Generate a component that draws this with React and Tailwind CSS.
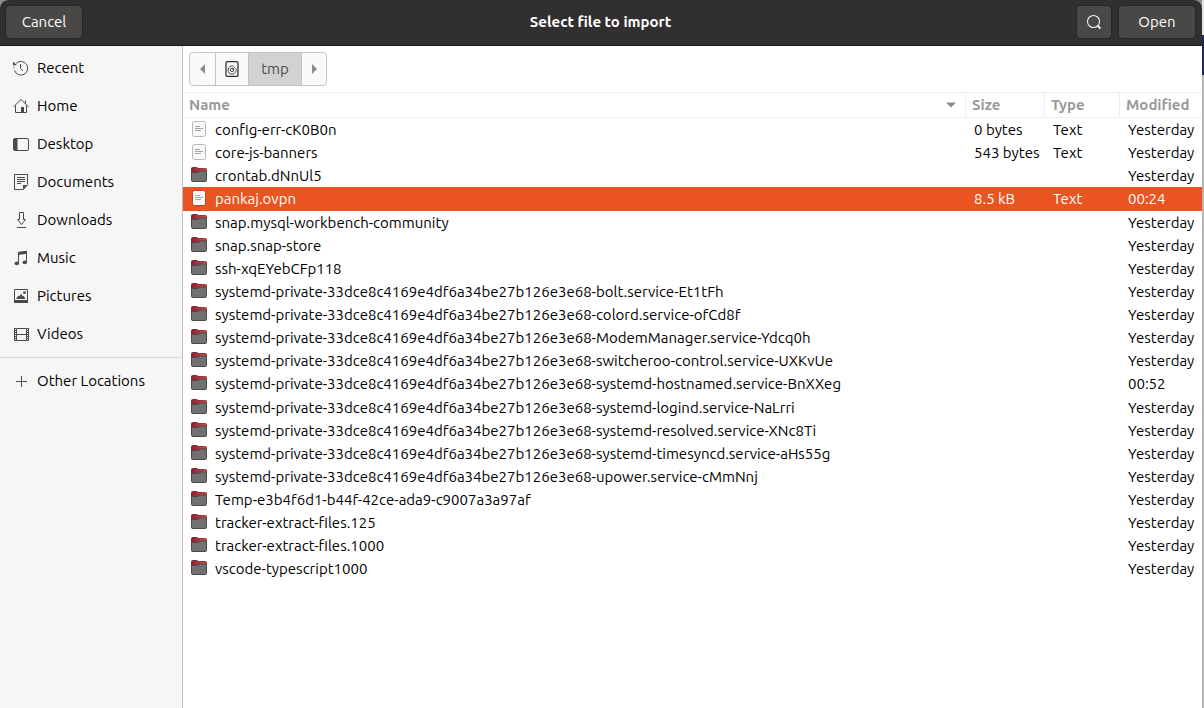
import React from 'react';

const ink = '#4a4a4a';

const Svg = ({ children, size = 16 }) => (
  <svg width={size} height={size} viewBox="0 0 16 16" fill="none" stroke={ink} aria-hidden="true" className="shrink-0">
    {children}
  </svg>
);

const RecentIcon = () => (
  <Svg>
    <path d="M3.300 3.300A6.800 6.800 0 1 1 1.500 10.500" />
    <path d="M.8 6.500v1.800" strokeOpacity=".7" />
    <path d="M0 1.600v3.600h4z" fill={ink} stroke="none" />
    <path d="M7.500 4v4.500L10 11" />
  </Svg>
);
const HomeIcon = () => (
  <Svg>
    <path d="M.6 8.800 8 1.400l7.400 7.400" />
    <path d="M2.500 7.500v7h11v-7M12.500 5.400V2.500" />
    <path d="M8 9h3v6H8z" fill={ink} stroke="none" />
  </Svg>
);
const DesktopIcon = () => (
  <Svg>
    <rect x=".5" y="2.500" width="15" height="12" rx="1.500" />
    <path d="M1 3h3v11H1z" fill={ink} />
  </Svg>
);
const DocumentsIcon = () => (
  <Svg>
    <path d="M1.500.5h13v10l-4 5h-9z" />
    <path d="M4 3.500h8M4 5.500h8M4 7.500h8M4 9.500h4" />
    <path d="M10 15.500V11h4.500z" fill={ink} stroke="none" />
  </Svg>
);
const DownloadsIcon = () => (
  <Svg>
    <path d="M6.500.5h4v7h2l-4 5-4-5h2z" />
    <path d="M4 15.500h9" />
  </Svg>
);
const MusicIcon = () => (
  <Svg>
    <path d="M5.500 13V2.500l8-1V12" />
    <path d="M5 2l9-1.200v3L5 5z" fill={ink} stroke="none" />
    <ellipse cx="3.800" cy="13.400" rx="2.200" ry="1.800" fill={ink} stroke="none" />
    <ellipse cx="11.800" cy="12.400" rx="2.200" ry="1.800" fill={ink} stroke="none" />
  </Svg>
);
const PicturesIcon = () => (
  <Svg>
    <path d="M1.500 1.500h13v11h-13z" />
    <path d="M1 12h14v3H1zM3 11l2.400-3.600 1 1L8 5.600l1.600 2.800.8-.8L12.600 11z" fill={ink} stroke="none" />
    <circle cx="11.500" cy="4.700" r="1.400" fill={ink} stroke="none" />
  </Svg>
);
const VideosIcon = () => (
  <Svg>
    <path d="M3.500 2.500h10v12h-10zM3.500 8.500h10" />
    <path d="M2 2v13M15 2v13" strokeWidth="2" strokeDasharray="1 1" />
    <path d="M1.500 2v13M15.500 2v13" />
  </Svg>
);
const PlusIcon = () => (
  <Svg>
    <path d="M3 8.500h11M8.500 3v11" />
  </Svg>
);
const DriveIcon = () => (
  <Svg>
    <rect x="2" y=".6" width="12" height="14.800" rx="1.500" strokeWidth="1.300" stroke="#333" />
    <path d="M11.800 7.400A4.100 4.100 0 1 1 9.600 5.300" />
    <circle cx="8" cy="9" r="1.700" />
    <path d="M8.500 8.500 11 6" />
  </Svg>
);
const SearchIcon = () => (
  <svg width="16" height="16" viewBox="0 0 16 16" fill="none" stroke="#f0f0f0" aria-hidden="true">
    <circle cx="7.500" cy="7.500" r="6" strokeWidth="1.100" />
    <path d="M11.500 11.500l3 3" strokeWidth="1.800" />
  </svg>
);
const TextFileIcon = ({ selected }) => (
  <svg width="16" height="18" viewBox="0 0 16 18" fill="none" aria-hidden="true">
    <rect x="1.500" y=".5" width="13" height="15" rx="2" fill="#f9f9f9" stroke={selected ? '#b8431c' : '#b9b9b9'} />
    <path d="M4 5.500h5M4 7.500h8M4 9.500h6" stroke="#9a9a9a" strokeWidth=".9" />
  </svg>
);
const FolderIcon = () => (
  <svg width="16" height="18" viewBox="0 0 16 18" fill="none" aria-hidden="true">
    <defs>
      <linearGradient id="tab" x1="0" x2="1">
        <stop offset="0" stopColor="#8c1d45" />
        <stop offset="1" stopColor="#d6522f" />
      </linearGradient>
    </defs>
    <path d="M0 2A2 2 0 0 1 2 0H6l1 1h7a2 2 0 0 1 2 2v5H0z" fill="#6a3038" />
    <path d="M.6 2.200A1.600 1.600 0 0 1 2.200.6H5.700l1 1h7.100a1.600 1.600 0 0 1 1.600 1.600V7H.6z" fill="url(#tab)" />
    <path d="M0 6Q0 5 1 5h5.500l1.500-1.500h6a2 2 0 0 1 2 2V13a2 2 0 0 1-2 2H2a2 2 0 0 1-2-2z" fill="#4b4949" />
    <path d="M1 6h6l1.500-1.500H14a1 1 0 0 1 1 1V13a1 1 0 0 1-1 1H2a1 1 0 0 1-1-1z" fill="#727070" />
  </svg>
);

const places = [
  ['Recent', RecentIcon],
  ['Home', HomeIcon],
  ['Desktop', DesktopIcon],
  ['Documents', DocumentsIcon],
  ['Downloads', DownloadsIcon],
  ['Music', MusicIcon],
  ['Pictures', PicturesIcon],
  ['Videos', VideosIcon],
];

const unit = 'systemd-private-33dce8c4169e4df6a34be27b126e3e68-';
const files = [
  { name: 'config-err-cK0B0n', size: '0 bytes', type: 'Text' },
  { name: 'core-js-banners', size: '543 bytes', type: 'Text' },
  { name: 'crontab.dNnUl5' },
  { name: 'pankaj.ovpn', size: '8.5 kB', type: 'Text', modified: '00:24', selected: true },
  { name: 'snap.mysql-workbench-community' },
  { name: 'snap.snap-store' },
  { name: 'ssh-xqEYebCFp118' },
  { name: unit + 'bolt.service-Et1tFh' },
  { name: unit + 'colord.service-ofCd8f' },
  { name: unit + 'ModemManager.service-Ydcq0h' },
  { name: unit + 'switcheroo-control.service-UXKvUe' },
  { name: unit + 'systemd-hostnamed.service-BnXXeg', modified: '00:52' },
  { name: unit + 'systemd-logind.service-NaLrri' },
  { name: unit + 'systemd-resolved.service-XNc8Ti' },
  { name: unit + 'systemd-timesyncd.service-aHs55g' },
  { name: unit + 'upower.service-cMmNnj' },
  { name: 'Temp-e3b4f6d1-b44f-42ce-ada9-c9007a3a97af' },
  { name: 'tracker-extract-files.125' },
  { name: 'tracker-extract-files.1000' },
  { name: 'vscode-typescript1000' },
];

const barButton = 'flex h-8 items-center justify-center rounded bg-[#4a4846] text-white ring-1 ring-[#282626]';

function Place({ label, Icon }) {
  return (
    <button className="flex h-[38px] w-full items-center gap-2 pl-[13px] text-left">
      <Icon />
      {label}
    </button>
  );
}

export default function App() {
  return (
    <div className="flex min-h-screen bg-[#8e8e8e] font-['Ubuntu','Noto_Sans',sans-serif] text-[15px] leading-5 text-black">
      <div className="flex min-w-0 flex-1 flex-col rounded-t-lg bg-white">
        <header className="grid h-[46px] shrink-0 grid-cols-[1fr_auto_1fr] items-center rounded-t-lg border-b border-[#1c1b1b] bg-[#322f30] pr-[7px] pb-px pl-[6px]">
          <button className={`${barButton} w-[76px] justify-self-start`}>Cancel</button>
          <h1 className="font-bold text-white">Select file to import</h1>
          <div className="flex gap-2 justify-self-end">
            <button aria-label="Search" className={`${barButton} w-[34px]`}>
              <SearchIcon />
            </button>
            <button className={`${barButton} w-[76px]`}>Open</button>
          </div>
        </header>

        <div className="flex flex-1">
          <nav className="w-[183px] shrink-0 border-r border-[#bdbdbd] bg-[#f6f6f6] pt-[3px]">
            {places.map(([label, Icon]) => (
              <Place key={label} label={label} Icon={Icon} />
            ))}
            <div className="mt-1 border-t border-[#d9d9d9] pt-1">
              <Place label="Other Locations" Icon={PlusIcon} />
            </div>
          </nav>

          <main className="min-w-0 flex-1">
            <div className="flex h-[46px] items-center pl-[6px]">
              <div className="flex h-[34px] divide-x divide-[#c4c4c4] overflow-hidden rounded border border-[#c4c4c4] bg-[#fafafa]">
                <button aria-label="Back" className="flex w-[26px] items-center justify-center">
                  <svg width="6" height="10" viewBox="0 0 6 10" fill="#8b8b8b"><path d="M5 0v10L0 5z" /></svg>
                </button>
                <button aria-label="File system root" className="flex w-[33px] items-center justify-center">
                  <DriveIcon />
                </button>
                <button className="w-[53px] bg-[#d2d2d2] text-[#4c4c4c]">tmp</button>
                <button aria-label="Forward" className="flex w-[24px] items-center justify-center">
                  <svg width="6" height="10" viewBox="0 0 6 10" fill="#8b8b8b"><path d="M1 0v10l5-5z" /></svg>
                </button>
              </div>
            </div>

            <table className="w-full table-fixed border-separate border-spacing-0 text-left whitespace-nowrap">
              <colgroup>
                <col />
                <col className="w-[79px]" />
                <col className="w-[75px]" />
                <col className="w-[82px]" />
              </colgroup>
              <thead className="text-[#999999]">
                <tr className="h-[26px]">
                  <th className="border-y border-r border-[#f0f0f0] p-0 pr-[9px] pl-[6px]">
                    <span className="flex items-center justify-between">
                      Name
                      <svg width="10" height="6" viewBox="0 0 10 6" fill="#8b8b8b" aria-hidden="true"><path d="M0 .5h10l-5 5z" /></svg>
                    </span>
                  </th>
                  <th className="border-y border-r border-[#f0f0f0] p-0 pl-[6px]">Size</th>
                  <th className="border-y border-r border-[#f0f0f0] p-0 pl-[6px]">Type</th>
                  <th className="border-y border-[#f0f0f0] p-0 pl-[6px]">Modified</th>
                </tr>
              </thead>
              <tbody>
                {files.map((f) => (
                  <tr
                    key={f.name}
                    aria-selected={!!f.selected}
                    className={f.selected ? 'h-6 bg-[#e95420] text-white' : f.modified ? 'h-6' : 'h-[23px]'}
                  >
                    <td className="p-0 pl-2">
                      <span className="flex items-center gap-2">
                        {f.type ? <TextFileIcon selected={f.selected} /> : <FolderIcon />}
                        {f.name}
                      </span>
                    </td>
                    <td className="p-0 pl-2">{f.size}</td>
                    <td className="p-0 pl-2">{f.type}</td>
                    <td className="p-0 pl-2">{f.modified || 'Yesterday'}</td>
                  </tr>
                ))}
              </tbody>
            </table>
          </main>
        </div>
      </div>
      <div className="flex w-[2px] shrink-0 flex-col" aria-hidden="true">
        <div className="h-[35px] bg-[#e4e4e4]" />
        <div className="h-10 bg-[#26265a]" />
        <div className="flex-1 bg-[#b5b5b5]" />
      </div>
    </div>
  );
}
